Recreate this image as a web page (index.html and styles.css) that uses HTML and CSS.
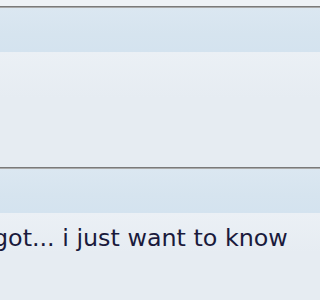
FILE: index.html
```html
<!DOCTYPE html>
<html>
<head>
<meta charset="utf-8">
<link rel="stylesheet" href="styles.css">
</head>
<body>
<div class="page">
  <div class="prev"></div>
  <div class="post">
    <div class="post-head"></div>
    <div class="post-body post-body--tall"></div>
  </div>
  <div class="post">
    <div class="post-head"></div>
    <div class="post-body">
      <p class="message">got... i just want to know</p>
    </div>
  </div>
</div>
</body>
</html>
```
FILE: styles.css
```css
html, body {
  margin: 0;
  padding: 0;
  overflow: hidden;
  background: #e6ecf2;
}
.page {
  display: flex;
  flex-direction: column;
}
.prev {
  height: 6px;
  background: #eef2f6;
}
.post {
  border-top: 1px solid #7a7a7a;
}
.post-head {
  height: 44px;
  border-top: 1px solid #a9a9a9;
  background: linear-gradient(#dbe7f1, #d6e4ef 60%, #d4e3ef);
}
.post-body {
  background: linear-gradient(#ebf0f5, #e6ecf2 40%);
}
.post-body--tall {
  height: 115px;
}
.message {
  margin: 0;
  padding-top: 11px;
  padding-bottom: 60px;
  text-indent: -7px;
  font-family: "DejaVu Sans", Verdana, sans-serif;
  font-size: 23.8px;
  line-height: 28px;
  color: #1a1a3c;
  white-space: nowrap;
}
```
